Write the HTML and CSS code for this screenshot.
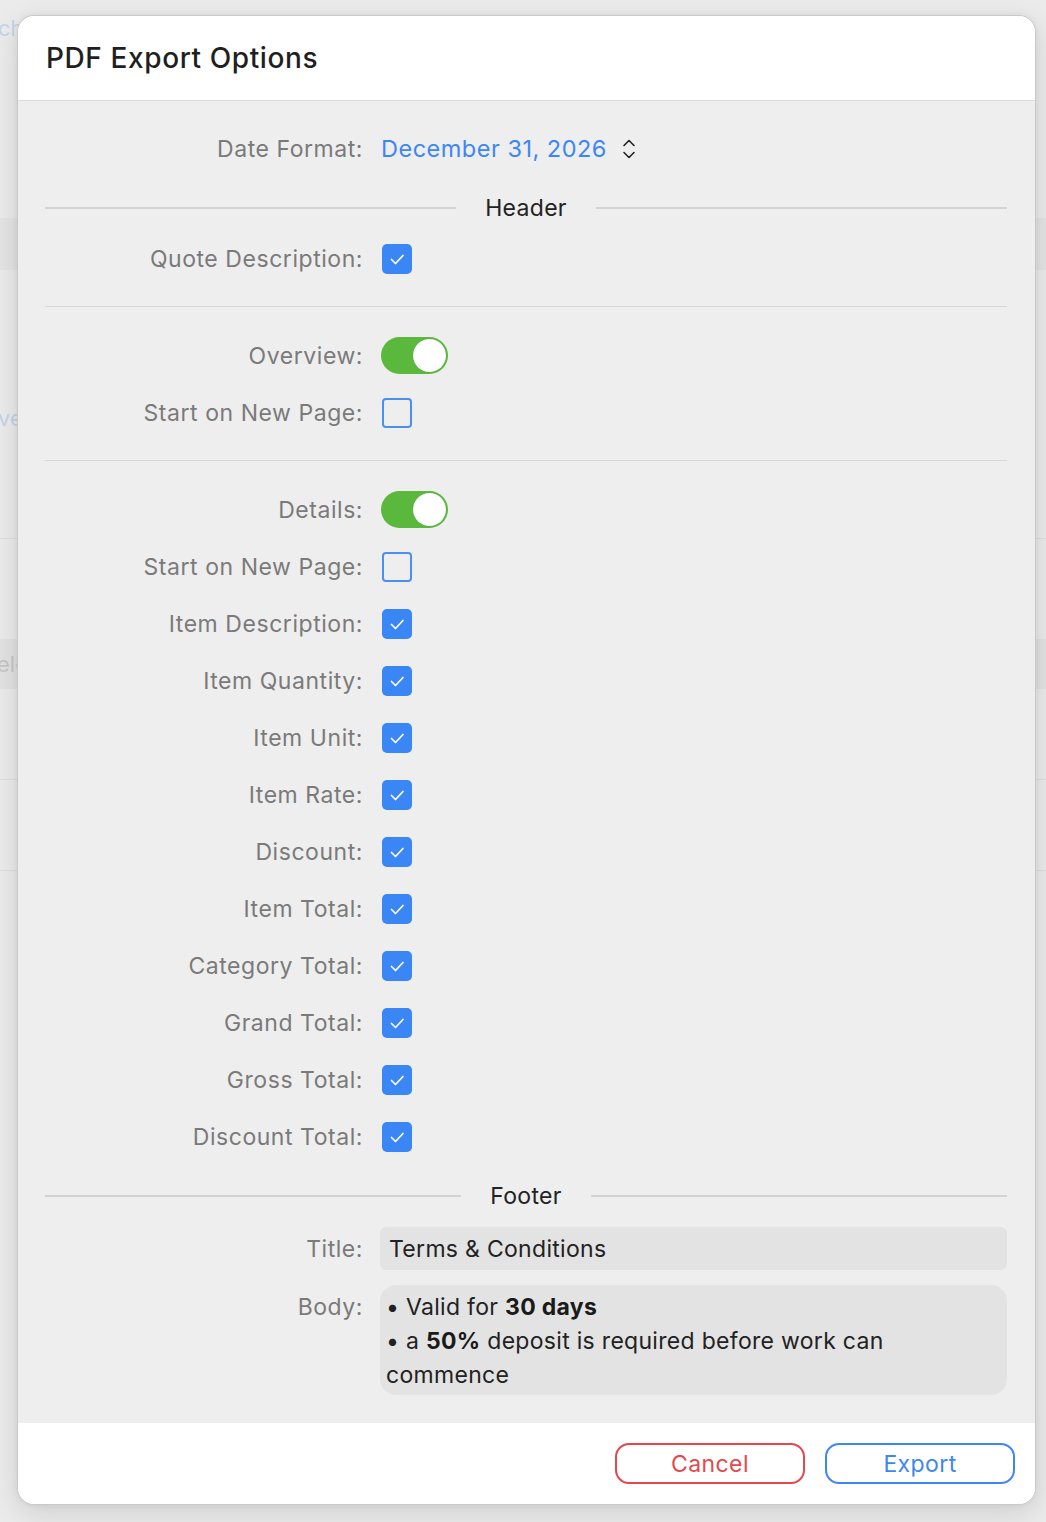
FILE: index.html
```html
<!DOCTYPE html>
<html lang="en">
<head>
<meta charset="utf-8">
<title>PDF Export Options</title>
<link rel="stylesheet" href="styles.css">
</head>
<body>
<div class="app">
  <div class="app-row app-top"><span class="ghost-link">ch</span></div>
  <div class="app-band"></div>
  <div class="app-row app-mid"><span class="ghost-link">ve</span></div>
  <div class="app-line"></div>
  <div class="app-box"><span class="ghost-text">elc</span></div>
  <div class="app-line"></div>
  <div class="app-line"></div>
</div>

<div class="dialog">
  <div class="dlg-head">
    <h1 class="dlg-title">PDF Export Options</h1>
  </div>

  <div class="dlg-body">
    <div class="row">
      <div class="label">Date Format:</div>
      <div class="control">
        <span class="popup">December 31, 2026</span>
        <svg class="chevrons" width="16" height="22" viewBox="0 0 16 22"><path d="M3 7.5 L8 2.5 L13 7.5" fill="none" stroke="#222" stroke-width="1.6" stroke-linecap="round" stroke-linejoin="round"/><path d="M3 14.5 L8 19.5 L13 14.5" fill="none" stroke="#222" stroke-width="1.6" stroke-linecap="round" stroke-linejoin="round"/></svg>
      </div>
    </div>

    <div class="section"><span class="section-name">Header</span></div>

    <div class="row">
      <div class="label">Quote Description:</div>
      <div class="control"><span class="check on"><svg width="30" height="30" viewBox="0 0 30 30"><path d="M9.5 15.5 L13.5 19.5 L21 11.5" fill="none" stroke="#fff" stroke-width="1.7" stroke-linecap="round" stroke-linejoin="round"/></svg></span></div>
    </div>

    <div class="divider"></div>

    <div class="row">
      <div class="label">Overview:</div>
      <div class="control"><span class="toggle"><span class="knob"></span></span></div>
    </div>
    <div class="row">
      <div class="label">Start on New Page:</div>
      <div class="control"><span class="check off"></span></div>
    </div>

    <div class="divider"></div>

    <div class="row">
      <div class="label">Details:</div>
      <div class="control"><span class="toggle"><span class="knob"></span></span></div>
    </div>
    <div class="row">
      <div class="label">Start on New Page:</div>
      <div class="control"><span class="check off"></span></div>
    </div>
    <div class="row">
      <div class="label">Item Description:</div>
      <div class="control"><span class="check on"><svg width="30" height="30" viewBox="0 0 30 30"><path d="M9.5 15.5 L13.5 19.5 L21 11.5" fill="none" stroke="#fff" stroke-width="1.7" stroke-linecap="round" stroke-linejoin="round"/></svg></span></div>
    </div>
    <div class="row">
      <div class="label">Item Quantity:</div>
      <div class="control"><span class="check on"><svg width="30" height="30" viewBox="0 0 30 30"><path d="M9.5 15.5 L13.5 19.5 L21 11.5" fill="none" stroke="#fff" stroke-width="1.7" stroke-linecap="round" stroke-linejoin="round"/></svg></span></div>
    </div>
    <div class="row">
      <div class="label">Item Unit:</div>
      <div class="control"><span class="check on"><svg width="30" height="30" viewBox="0 0 30 30"><path d="M9.5 15.5 L13.5 19.5 L21 11.5" fill="none" stroke="#fff" stroke-width="1.7" stroke-linecap="round" stroke-linejoin="round"/></svg></span></div>
    </div>
    <div class="row">
      <div class="label">Item Rate:</div>
      <div class="control"><span class="check on"><svg width="30" height="30" viewBox="0 0 30 30"><path d="M9.5 15.5 L13.5 19.5 L21 11.5" fill="none" stroke="#fff" stroke-width="1.7" stroke-linecap="round" stroke-linejoin="round"/></svg></span></div>
    </div>
    <div class="row">
      <div class="label">Discount:</div>
      <div class="control"><span class="check on"><svg width="30" height="30" viewBox="0 0 30 30"><path d="M9.5 15.5 L13.5 19.5 L21 11.5" fill="none" stroke="#fff" stroke-width="1.7" stroke-linecap="round" stroke-linejoin="round"/></svg></span></div>
    </div>
    <div class="row">
      <div class="label">Item Total:</div>
      <div class="control"><span class="check on"><svg width="30" height="30" viewBox="0 0 30 30"><path d="M9.5 15.5 L13.5 19.5 L21 11.5" fill="none" stroke="#fff" stroke-width="1.7" stroke-linecap="round" stroke-linejoin="round"/></svg></span></div>
    </div>
    <div class="row">
      <div class="label">Category Total:</div>
      <div class="control"><span class="check on"><svg width="30" height="30" viewBox="0 0 30 30"><path d="M9.5 15.5 L13.5 19.5 L21 11.5" fill="none" stroke="#fff" stroke-width="1.7" stroke-linecap="round" stroke-linejoin="round"/></svg></span></div>
    </div>
    <div class="row">
      <div class="label">Grand Total:</div>
      <div class="control"><span class="check on"><svg width="30" height="30" viewBox="0 0 30 30"><path d="M9.5 15.5 L13.5 19.5 L21 11.5" fill="none" stroke="#fff" stroke-width="1.7" stroke-linecap="round" stroke-linejoin="round"/></svg></span></div>
    </div>
    <div class="row">
      <div class="label">Gross Total:</div>
      <div class="control"><span class="check on"><svg width="30" height="30" viewBox="0 0 30 30"><path d="M9.5 15.5 L13.5 19.5 L21 11.5" fill="none" stroke="#fff" stroke-width="1.7" stroke-linecap="round" stroke-linejoin="round"/></svg></span></div>
    </div>
    <div class="row">
      <div class="label">Discount Total:</div>
      <div class="control"><span class="check on"><svg width="30" height="30" viewBox="0 0 30 30"><path d="M9.5 15.5 L13.5 19.5 L21 11.5" fill="none" stroke="#fff" stroke-width="1.7" stroke-linecap="round" stroke-linejoin="round"/></svg></span></div>
    </div>

    <div class="section section-foot"><span class="section-name">Footer</span></div>

    <div class="field-row">
      <div class="label">Title:</div>
      <div class="field field-title">Terms &amp; Conditions</div>
    </div>
    <div class="field-row field-row-top">
      <div class="label label-top">Body:</div>
      <div class="field field-body">
        <p class="body-line">• Valid for <b>30 days</b></p>
        <p class="body-line">• a <b>50%</b> deposit is required before work can commence</p>
      </div>
    </div>
  </div>

  <div class="dlg-foot">
    <button class="btn btn-cancel" type="button">Cancel</button>
    <button class="btn btn-export" type="button">Export</button>
  </div>
</div>
</body>
</html>
```

FILE: styles.css
```css
* { box-sizing: border-box; }

html, body {
  margin: 0;
  padding: 0;
}

body {
  width: 1046px;
  height: 1522px;
  background: #e7e7e7;
  font-family: Inter, "Liberation Sans", sans-serif;
  position: relative;
  overflow: hidden;
}

/* faint application behind the sheet */
.app {
  display: flex;
  flex-direction: column;
  height: 100%;
  background: #ebebeb;
  filter: blur(0.4px);
}
.app-row {
  height: 60px;
  display: flex;
  align-items: center;
  font-size: 22px;
}
.app-top { height: 55px; }
.ghost-link { color: #c3d3ea; margin-left: -2px; }
.ghost-text { color: #c6c6c6; font-size: 22px; margin-left: -3px; }
.app-band {
  height: 52px;
  margin-top: 163px;
  background: #e4e4e4;
}
.app-mid { margin-top: 118px; }
.app-line {
  height: 1px;
  background: #dedede;
  margin-top: 90px;
}
.app-box {
  height: 50px;
  margin-top: 100px;
  background: #e2e2e2;
  display: flex;
  align-items: center;
}

/* dialog sheet */
.dialog {
  position: absolute;
  left: 17px;
  top: 15px;
  width: 1019px;
  height: 1490px;
  border: 1px solid #c9c9c9;
  border-radius: 17px;
  background: #eeeeee;
  box-shadow: 0 8px 28px rgba(0, 0, 0, 0.12), 0 0 6px rgba(0, 0, 0, 0.06);
  overflow: hidden;
  display: flex;
  flex-direction: column;
}

.dlg-head {
  height: 85px;
  background: #ffffff;
  border-bottom: 1px solid #dcdcdc;
  display: flex;
  align-items: center;
  padding-left: 28px;
  flex: none;
}
.dlg-title {
  margin: 0;
  font-size: 28px;
  font-weight: 500;
  color: #1f1f1f;
  letter-spacing: 0.6px;
  padding-bottom: 1px;
}

.dlg-body {
  flex: 1;
  background: #eeeeee;
  padding: 19px 28px 0 27px;
}

.row {
  display: grid;
  grid-template-columns: 318px 1fr;
  column-gap: 18px;
  height: 57px;
  align-items: center;
}

.label {
  text-align: right;
  font-size: 23px;
  color: #7a7a7a;
  white-space: nowrap;
  letter-spacing: 0.55px;
}

.control {
  display: flex;
  align-items: center;
  gap: 14px;
}

.popup {
  color: #3d87f5;
  font-size: 23.5px;
  letter-spacing: 0.5px;
}
.chevrons { margin-top: 1px; }

.section {
  margin: 16px 0 7px;
  height: 30px;
  display: flex;
  align-items: center;
  gap: 29px;
  font-size: 23px;
  color: #222;
  letter-spacing: 0.3px;
}
.section::before,
.section::after {
  content: "";
  flex: 1;
  height: 2px;
  background: #d3d3d3;
}
.section-name { flex: none; }
.section-foot { margin: 16px 0 16px; }

.divider {
  height: 1px;
  background: #d6d6d6;
  margin: 19px 0 20px;
}

.check {
  width: 30px;
  height: 30px;
  margin-left: 1px;
  border-radius: 5px;
  display: block;
}
.check.on {
  background: #3b86f5;
}
.check.on svg { display: block; }
.check.off {
  border: 2px solid #4b8ef4;
  border-radius: 4px;
  background: transparent;
}

.toggle {
  width: 67px;
  height: 37px;
  border-radius: 19px;
  background: #5ab93c;
  display: flex;
  align-items: center;
  justify-content: flex-end;
  padding-right: 2px;
}
.knob {
  width: 33px;
  height: 33px;
  border-radius: 50%;
  background: #ffffff;
  box-shadow: 0 0 1px rgba(0, 0, 0, 0.2);
}

.field-row {
  display: grid;
  grid-template-columns: 318px 1fr;
  column-gap: 17px;
  align-items: center;
  margin-bottom: 15px;
}
.field-row-top { align-items: start; }
.label-top { padding-top: 5px; line-height: 34px; }

.field {
  background: #e3e3e3;
  color: #222;
  font-size: 23px;
  letter-spacing: 0.3px;
}
.field-title {
  height: 43px;
  border-radius: 6px;
  padding-left: 9px;
  display: flex;
  align-items: center;
}
.field-body {
  height: 110px;
  border-radius: 16px;
  padding: 5px 100px 3px 6px;
  line-height: 34px;
}
.body-line { margin: 0; }
.field-body b { font-weight: 700; color: #1a1a1a; }

.dlg-foot {
  flex: none;
  height: 81px;
  background: #ffffff;
  display: flex;
  justify-content: flex-end;
  align-items: center;
  gap: 20px;
  padding-right: 20px;
}
.btn {
  width: 190px;
  height: 41px;
  border-radius: 14px;
  background: #ffffff;
  font-family: Inter, "Liberation Sans", sans-serif;
  font-size: 23px;
  letter-spacing: 0.4px;
  padding: 0;
  cursor: pointer;
}
.btn-cancel {
  border: 2px solid #e5484b;
  color: #e5484b;
}
.btn-export {
  border: 2px solid #3d87f5;
  color: #3d87f5;
}
```
